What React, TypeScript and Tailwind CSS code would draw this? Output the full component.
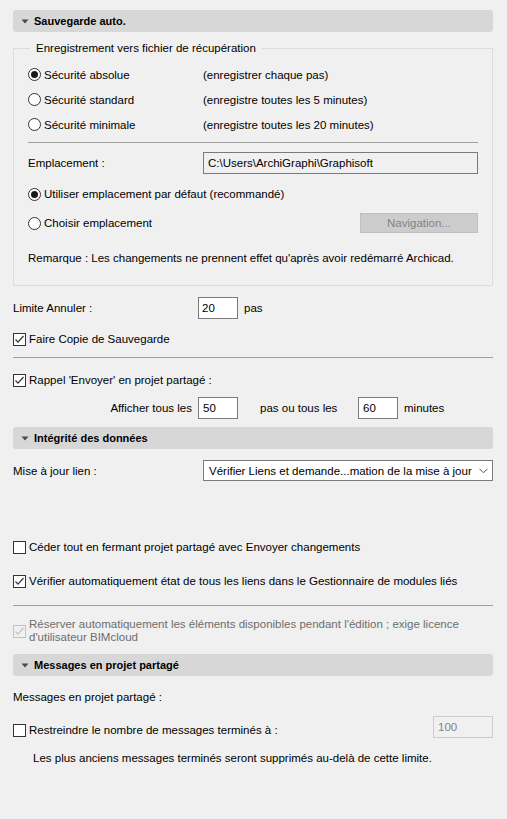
import React from "react";

function Tri() {
  return (
    <svg width="8" height="5" viewBox="0 0 8 5" className="mr-[5px] ml-[8px]">
      <polygon points="0.5,0.5 7.5,0.5 4,4.5" fill="#4a4a4a" />
    </svg>
  );
}

function Header({ title, className = "" }: { title: string; className?: string }) {
  return (
    <div className={"flex h-[22px] items-center rounded-[3px] bg-[#d7d7d7] " + className}>
      <Tri />
      <span className="text-[11px] font-bold text-black">{title}</span>
    </div>
  );
}

function Radio({ on }: { on?: boolean }) {
  return (
    <span className="flex h-[13px] w-[13px] shrink-0 items-center justify-center rounded-full border border-[#333333] bg-white">
      {on && <span className="h-[7px] w-[7px] rounded-full bg-[#1a1a1a]" />}
    </span>
  );
}

function Check({ on, disabled }: { on?: boolean; disabled?: boolean }) {
  const c = disabled ? "#c2c2c2" : "#333333";
  return (
    <span
      className={
        "flex h-[13px] w-[13px] shrink-0 items-center justify-center border " +
        (disabled ? "border-[#c2c2c2] bg-[#f0f0f0]" : "border-[#333333] bg-white")
      }
    >
      {on && (
        <svg width="11" height="11" viewBox="0 0 11 11">
          <polyline points="1.5,5.5 4,8.2 9.5,2" fill="none" stroke={c} strokeWidth="1.2" />
        </svg>
      )}
    </span>
  );
}

function RadioRow({ on, label, note }: { on?: boolean; label: string; note?: string }) {
  return (
    <div className="flex h-[25px] items-center">
      <div className="flex w-[175px] items-center gap-[3px]">
        <Radio on={on} />
        <span>{label}</span>
      </div>
      {note && <span>{note}</span>}
    </div>
  );
}

export default function App() {
  return (
    <div
      className="h-[819px] w-[507px] overflow-hidden bg-[#f0f0f0] pl-[13px] pr-[14px] text-[11.5px] leading-[16px] text-black"
      style={{ fontFamily: '"Liberation Sans", Arial, sans-serif' }}
    >
      <Header title="Sauvegarde auto." className="mt-[10px]" />

      <fieldset className="mt-[8px] border border-[#dcdcdc] px-[14px] pb-[19px]">
        <legend className="ml-[2px] px-[6px]">Enregistrement vers fichier de récupération</legend>
        <div className="pt-[6px]">
          <RadioRow on label="Sécurité absolue" note="(enregistrer chaque pas)" />
          <RadioRow label="Sécurité standard" note="(enregistre toutes les 5 minutes)" />
          <RadioRow label="Sécurité minimale" note="(enregistre toutes les 20 minutes)" />
        </div>
        <div className="mt-[5px] h-px bg-[#a0a0a0]" />
        <div className="mt-[9px] flex h-[22px] items-center">
          <span className="w-[175px]">Emplacement :</span>
          <div className="flex h-[22px] flex-1 items-center border border-[#7a7a7a] bg-[#f0f0f0] pl-[4px]">
            C:\Users\ArchiGraphi\Graphisoft
          </div>
        </div>
        <div className="mt-[10px] flex h-[20px] items-center gap-[3px]">
          <Radio on />
          <span>Utiliser emplacement par défaut (recommandé)</span>
        </div>
        <div className="mt-[9px] flex h-[20px] items-center">
          <div className="flex items-center gap-[3px]">
            <Radio />
            <span>Choisir emplacement</span>
          </div>
          <div className="ml-auto flex h-[20px] w-[118px] items-center justify-center border border-[#bfbfbf] bg-[#cccccc] text-[#838383]">
            Navigation...
          </div>
        </div>
        <div className="mt-[17px] flex h-[16px] items-center">
          Remarque : Les changements ne prennent effet qu'après avoir redémarré Archicad.
        </div>
      </fieldset>

      <div className="mt-[11px] flex h-[22px] items-center">
        <span className="w-[185px]">Limite Annuler :</span>
        <div className="flex h-[22px] w-[40px] items-center border border-[#7a7a7a] bg-white pl-[3px]">20</div>
        <span className="ml-[6px]">pas</span>
      </div>

      <div className="mt-[12px] flex h-[16px] items-center gap-[3px]">
        <Check on />
        <span>Faire Copie de Sauvegarde</span>
      </div>

      <div className="mt-[10px] h-px bg-[#a0a0a0]" />

      <div className="mt-[14px] flex h-[16px] items-center gap-[3px]">
        <Check on />
        <span>Rappel 'Envoyer' en projet partagé :</span>
      </div>

      <div className="mt-[9px] flex h-[22px] items-center">
        <span className="w-[179px] text-right">Afficher tous les</span>
        <div className="ml-[6px] flex h-[22px] w-[40px] items-center border border-[#7a7a7a] bg-white pl-[4px]">50</div>
        <span className="ml-[22px] w-[98px]">pas ou tous les</span>
        <div className="flex h-[22px] w-[40px] items-center border border-[#7a7a7a] bg-white pl-[4px]">60</div>
        <span className="ml-[6px]">minutes</span>
      </div>

      <Header title="Intégrité des données" className="mt-[8px]" />

      <div className="mt-[11px] flex h-[21px] items-center">
        <span className="w-[190px]">Mise à jour lien :</span>
        <div className="flex h-[21px] flex-1 items-center border border-[#7a7a7a] bg-white pl-[5px] pr-[4px]">
          <span className="flex-1">Vérifier Liens et demande...mation de la mise à jour</span>
          <svg width="9" height="6" viewBox="0 0 9 6">
            <polyline points="0.5,0.8 4.5,4.8 8.5,0.8" fill="none" stroke="#555555" strokeWidth="1" />
          </svg>
        </div>
      </div>

      <div className="mt-[58px] flex h-[16px] items-center gap-[3px]">
        <Check />
        <span>Céder tout en fermant projet partagé avec Envoyer changements</span>
      </div>

      <div className="mt-[18px] flex h-[16px] items-center gap-[3px]">
        <Check on />
        <span>Vérifier automatiquement état de tous les liens dans le Gestionnaire de modules liés</span>
      </div>

      <div className="mt-[16px] h-px bg-[#a0a0a0]" />

      <div className="mt-[12px] flex items-center gap-[3px]">
        <Check on disabled />
        <span className="w-[445px] leading-[13px] text-[#6d6d6d]">
          Réserver automatiquement les éléments disponibles pendant l'édition ; exige licence d'utilisateur BIMcloud
        </span>
      </div>

      <Header title="Messages en projet partagé" className="mt-[10px]" />

      <div className="mt-[13px] flex h-[16px] items-center">Messages en projet partagé :</div>

      <div className="mt-[11px] flex items-start">
        <div className="mt-[6px] flex h-[16px] items-center gap-[3px]">
          <Check />
          <span>Restreindre le nombre de messages terminés à :</span>
        </div>
        <div className="ml-auto flex h-[22px] w-[60px] items-center border border-[#cccccc] bg-[#f0f0f0] pl-[4px] text-[#838383]">
          100
        </div>
      </div>

      <div className="mt-[12px] flex h-[16px] items-center pl-[20px]">
        Les plus anciens messages terminés seront supprimés au-delà de cette limite.
      </div>
    </div>
  );
}
